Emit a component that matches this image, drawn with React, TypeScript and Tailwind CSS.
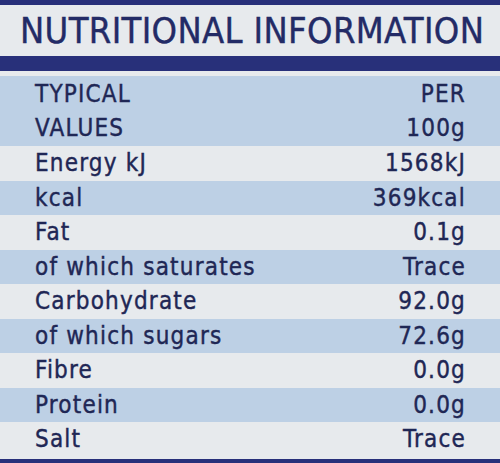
const rows: [string, string][] = [
  ["Energy kJ", "1568kJ"],
  ["kcal", "369kcal"],
  ["Fat", "0.1g"],
  ["of which saturates", "Trace"],
  ["Carbohydrate", "92.0g"],
  ["of which sugars", "72.6g"],
  ["Fibre", "0.0g"],
  ["Protein", "0.0g"],
  ["Salt", "Trace"],
];

export default function App() {
  return (
    <div
      className="flex h-[463px] w-[500px] flex-col overflow-hidden bg-[#e7eaed] text-[#1f2755] [-webkit-text-stroke:0.4px_currentColor]"
      style={{ fontFamily: '"DejaVu Sans Condensed", "DejaVu Sans", sans-serif' }}
    >
      <div className="h-[5px] shrink-0 bg-[#28307a]" />
      <div className="flex h-[51px] shrink-0 items-center whitespace-nowrap pl-[20px] text-[36px] leading-none tracking-[0.01em] text-[#232b66]">
        NUTRITIONAL INFORMATION
      </div>
      <div className="h-[15px] shrink-0 bg-[#28307a]" />
      <div className="h-[5px] shrink-0" />
      <div className="flex h-[70px] shrink-0 items-center justify-between bg-[#bdd0e5] pl-[35px] pr-[34px] text-[24px] leading-[34px] tracking-[0.05em]">
        <div>
          TYPICAL
          <br />
          VALUES
        </div>
        <div className="text-right">
          PER
          <br />
          100g
        </div>
      </div>
      <div className="flex flex-col">
        {rows.map(([label, value], i) => (
          <div
            key={label}
            className={`flex h-[34.5px] items-center justify-between pl-[35px] pr-[34px] text-[24px] tracking-[0.05em] ${
              i % 2 === 1 ? "bg-[#bdd0e5]" : ""
            }`}
          >
            <span>{label}</span>
            <span>{value}</span>
          </div>
        ))}
      </div>
      <div className="mt-auto h-[4px] shrink-0 bg-[#28307a]" />
    </div>
  );
}
